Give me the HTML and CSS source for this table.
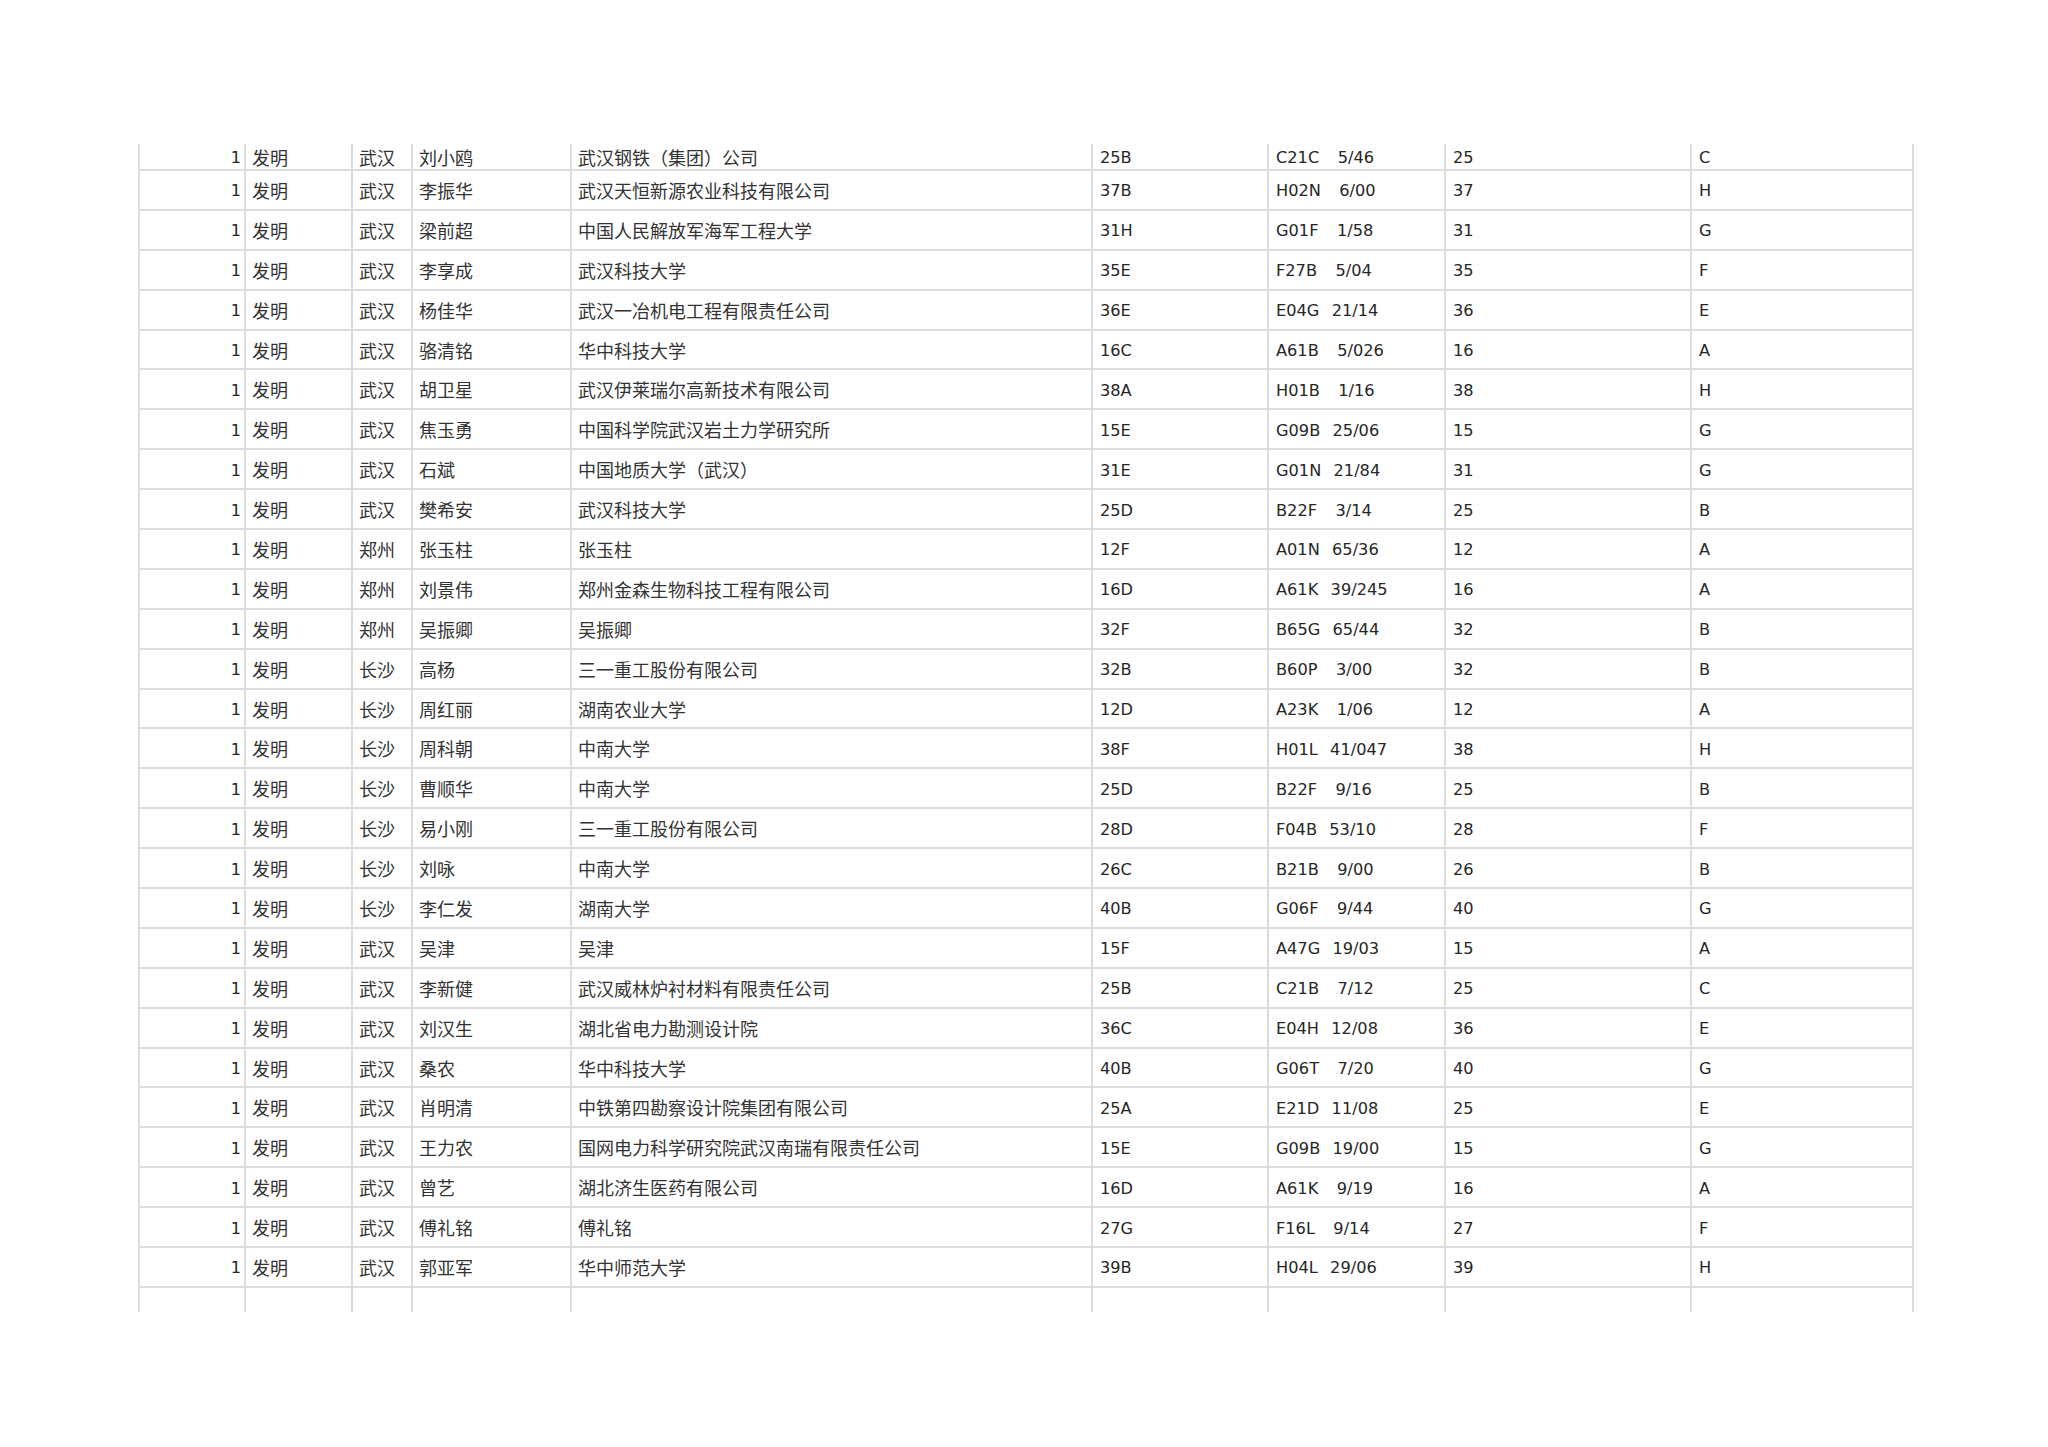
FILE: index.html
```html
<!DOCTYPE html>
<html lang="zh-CN">
<head>
<meta charset="utf-8">
<title>专利表</title>
<link rel="stylesheet" href="styles.css">
</head>
<body>
<div class="page">
<div class="sheet">
<div class="n">1</div><div class="c">发明</div><div class="c">武汉</div><div class="c">刘小鸥</div><div class="c">武汉钢铁（集团）公司</div><div class="l">25B</div><div class="l">C21C   5/46</div><div class="l">25</div><div class="l">C</div>
<div class="n">1</div><div class="c">发明</div><div class="c">武汉</div><div class="c">李振华</div><div class="c">武汉天恒新源农业科技有限公司</div><div class="l">37B</div><div class="l">H02N   6/00</div><div class="l">37</div><div class="l">H</div>
<div class="n">1</div><div class="c">发明</div><div class="c">武汉</div><div class="c">梁前超</div><div class="c">中国人民解放军海军工程大学</div><div class="l">31H</div><div class="l">G01F   1/58</div><div class="l">31</div><div class="l">G</div>
<div class="n">1</div><div class="c">发明</div><div class="c">武汉</div><div class="c">李享成</div><div class="c">武汉科技大学</div><div class="l">35E</div><div class="l">F27B   5/04</div><div class="l">35</div><div class="l">F</div>
<div class="n">1</div><div class="c">发明</div><div class="c">武汉</div><div class="c">杨佳华</div><div class="c">武汉一冶机电工程有限责任公司</div><div class="l">36E</div><div class="l">E04G  21/14</div><div class="l">36</div><div class="l">E</div>
<div class="n">1</div><div class="c">发明</div><div class="c">武汉</div><div class="c">骆清铭</div><div class="c">华中科技大学</div><div class="l">16C</div><div class="l">A61B   5/026</div><div class="l">16</div><div class="l">A</div>
<div class="n">1</div><div class="c">发明</div><div class="c">武汉</div><div class="c">胡卫星</div><div class="c">武汉伊莱瑞尔高新技术有限公司</div><div class="l">38A</div><div class="l">H01B   1/16</div><div class="l">38</div><div class="l">H</div>
<div class="n">1</div><div class="c">发明</div><div class="c">武汉</div><div class="c">焦玉勇</div><div class="c">中国科学院武汉岩土力学研究所</div><div class="l">15E</div><div class="l">G09B  25/06</div><div class="l">15</div><div class="l">G</div>
<div class="n">1</div><div class="c">发明</div><div class="c">武汉</div><div class="c">石斌</div><div class="c">中国地质大学（武汉）</div><div class="l">31E</div><div class="l">G01N  21/84</div><div class="l">31</div><div class="l">G</div>
<div class="n">1</div><div class="c">发明</div><div class="c">武汉</div><div class="c">樊希安</div><div class="c">武汉科技大学</div><div class="l">25D</div><div class="l">B22F   3/14</div><div class="l">25</div><div class="l">B</div>
<div class="n">1</div><div class="c">发明</div><div class="c">郑州</div><div class="c">张玉柱</div><div class="c">张玉柱</div><div class="l">12F</div><div class="l">A01N  65/36</div><div class="l">12</div><div class="l">A</div>
<div class="n">1</div><div class="c">发明</div><div class="c">郑州</div><div class="c">刘景伟</div><div class="c">郑州金森生物科技工程有限公司</div><div class="l">16D</div><div class="l">A61K  39/245</div><div class="l">16</div><div class="l">A</div>
<div class="n">1</div><div class="c">发明</div><div class="c">郑州</div><div class="c">吴振卿</div><div class="c">吴振卿</div><div class="l">32F</div><div class="l">B65G  65/44</div><div class="l">32</div><div class="l">B</div>
<div class="n">1</div><div class="c">发明</div><div class="c">长沙</div><div class="c">高杨</div><div class="c">三一重工股份有限公司</div><div class="l">32B</div><div class="l">B60P   3/00</div><div class="l">32</div><div class="l">B</div>
<div class="n">1</div><div class="c">发明</div><div class="c">长沙</div><div class="c">周红丽</div><div class="c">湖南农业大学</div><div class="l">12D</div><div class="l">A23K   1/06</div><div class="l">12</div><div class="l">A</div>
<div class="n">1</div><div class="c">发明</div><div class="c">长沙</div><div class="c">周科朝</div><div class="c">中南大学</div><div class="l">38F</div><div class="l">H01L  41/047</div><div class="l">38</div><div class="l">H</div>
<div class="n">1</div><div class="c">发明</div><div class="c">长沙</div><div class="c">曹顺华</div><div class="c">中南大学</div><div class="l">25D</div><div class="l">B22F   9/16</div><div class="l">25</div><div class="l">B</div>
<div class="n">1</div><div class="c">发明</div><div class="c">长沙</div><div class="c">易小刚</div><div class="c">三一重工股份有限公司</div><div class="l">28D</div><div class="l">F04B  53/10</div><div class="l">28</div><div class="l">F</div>
<div class="n">1</div><div class="c">发明</div><div class="c">长沙</div><div class="c">刘咏</div><div class="c">中南大学</div><div class="l">26C</div><div class="l">B21B   9/00</div><div class="l">26</div><div class="l">B</div>
<div class="n">1</div><div class="c">发明</div><div class="c">长沙</div><div class="c">李仁发</div><div class="c">湖南大学</div><div class="l">40B</div><div class="l">G06F   9/44</div><div class="l">40</div><div class="l">G</div>
<div class="n">1</div><div class="c">发明</div><div class="c">武汉</div><div class="c">吴津</div><div class="c">吴津</div><div class="l">15F</div><div class="l">A47G  19/03</div><div class="l">15</div><div class="l">A</div>
<div class="n">1</div><div class="c">发明</div><div class="c">武汉</div><div class="c">李新健</div><div class="c">武汉威林炉衬材料有限责任公司</div><div class="l">25B</div><div class="l">C21B   7/12</div><div class="l">25</div><div class="l">C</div>
<div class="n">1</div><div class="c">发明</div><div class="c">武汉</div><div class="c">刘汉生</div><div class="c">湖北省电力勘测设计院</div><div class="l">36C</div><div class="l">E04H  12/08</div><div class="l">36</div><div class="l">E</div>
<div class="n">1</div><div class="c">发明</div><div class="c">武汉</div><div class="c">桑农</div><div class="c">华中科技大学</div><div class="l">40B</div><div class="l">G06T   7/20</div><div class="l">40</div><div class="l">G</div>
<div class="n">1</div><div class="c">发明</div><div class="c">武汉</div><div class="c">肖明清</div><div class="c">中铁第四勘察设计院集团有限公司</div><div class="l">25A</div><div class="l">E21D  11/08</div><div class="l">25</div><div class="l">E</div>
<div class="n">1</div><div class="c">发明</div><div class="c">武汉</div><div class="c">王力农</div><div class="c">国网电力科学研究院武汉南瑞有限责任公司</div><div class="l">15E</div><div class="l">G09B  19/00</div><div class="l">15</div><div class="l">G</div>
<div class="n">1</div><div class="c">发明</div><div class="c">武汉</div><div class="c">曾艺</div><div class="c">湖北济生医药有限公司</div><div class="l">16D</div><div class="l">A61K   9/19</div><div class="l">16</div><div class="l">A</div>
<div class="n">1</div><div class="c">发明</div><div class="c">武汉</div><div class="c">傅礼铭</div><div class="c">傅礼铭</div><div class="l">27G</div><div class="l">F16L   9/14</div><div class="l">27</div><div class="l">F</div>
<div class="n">1</div><div class="c">发明</div><div class="c">武汉</div><div class="c">郭亚军</div><div class="c">华中师范大学</div><div class="l">39B</div><div class="l">H04L  29/06</div><div class="l">39</div><div class="l">H</div>
<div class="e"></div><div class="e"></div><div class="e"></div><div class="e"></div><div class="e"></div><div class="e"></div><div class="e"></div><div class="e"></div><div class="e"></div>
</div>
</div>
</body>
</html>
```

FILE: styles.css
```css
html, body {
  margin: 0;
  padding: 0;
  background: #ffffff;
}

.page {
  padding: 144px 0 0 138px;
}

.sheet {
  display: grid;
  width: max-content;
  grid-template-columns: 106px 107px 60px 159px 521px 176px 177px 246px 222px;
  grid-template-rows: 27px repeat(28, 39.9px) 24px;
  border-left: 2px solid #dcdcdc;
  color: #262626;
}

.sheet > div {
  box-sizing: border-box;
  border-right: 2px solid #dcdcdc;
  border-bottom: 2px solid #dcdcdc;
  display: flex;
  align-items: center;
  white-space: pre;
  overflow: hidden;
}

.sheet > .e {
  border-bottom: none;
}

.c {
  font-family: "Noto Sans CJK SC", "Noto Sans", sans-serif;
  font-size: 18px;
  padding-left: 6px;
  color: #333333;
}

.l {
  font-family: "DejaVu Sans", "Noto Sans CJK SC", sans-serif;
  font-size: 16.2px;
  word-spacing: 1px;
  padding-left: 7px;
  padding-top: 2px;
}

.n {
  font-family: "DejaVu Sans", sans-serif;
  font-size: 16.2px;
  justify-content: flex-end;
  padding-right: 3px;
  padding-top: 2px;
}
```
